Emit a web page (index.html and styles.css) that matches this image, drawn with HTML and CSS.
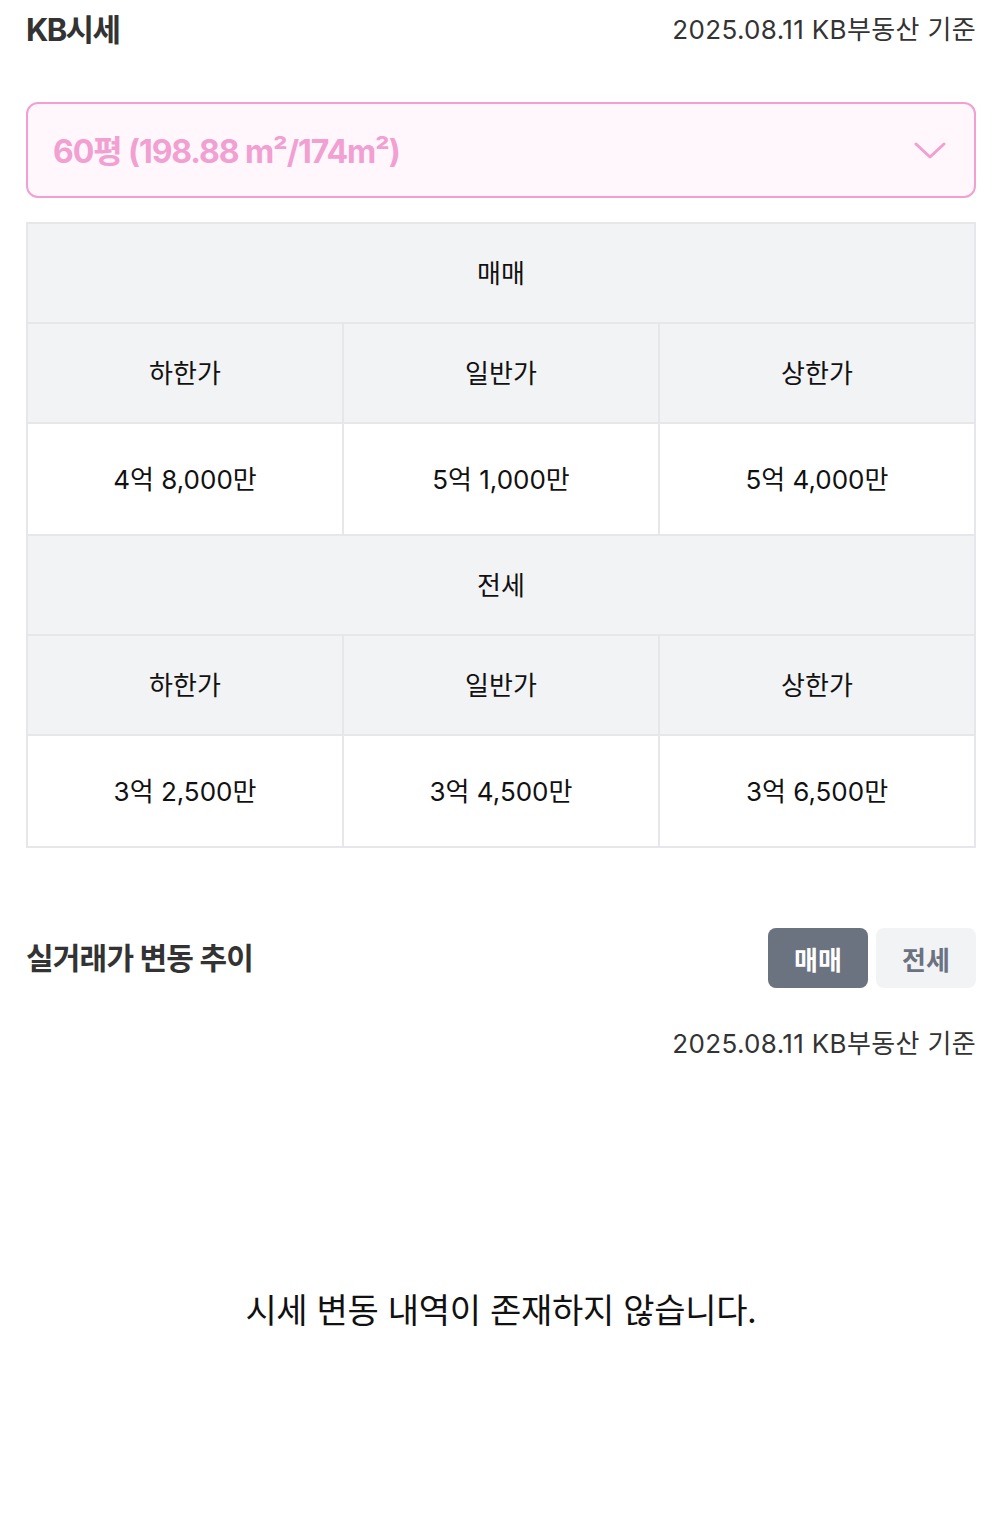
FILE: index.html
```html
<!DOCTYPE html>
<html lang="ko">
<head>
<meta charset="utf-8">
<link rel="stylesheet" href="styles.css">
</head>
<body>
<div class="page">
  <div class="top">
    <h1 class="title">KB시세</h1>
    <span class="basis">2025.08.11 KB부동산 기준</span>
  </div>
  <div class="select">
    <span class="select-text">60평 (198.88 m²/174m²)</span>
    <svg class="chev" width="32" height="18" viewBox="0 0 32 18"><polyline points="2,2 16,15 30,2" fill="none" stroke="#f29fd2" stroke-width="3" stroke-linecap="round" stroke-linejoin="round"/></svg>
  </div>
  <table class="price">
    <tr class="head"><td colspan="3">매매</td></tr>
    <tr class="head"><td>하한가</td><td>일반가</td><td>상한가</td></tr>
    <tr class="val"><td>4억 8,000만</td><td>5억 1,000만</td><td>5억 4,000만</td></tr>
    <tr class="head"><td colspan="3">전세</td></tr>
    <tr class="head"><td>하한가</td><td>일반가</td><td>상한가</td></tr>
    <tr class="val"><td>3억 2,500만</td><td>3억 4,500만</td><td>3억 6,500만</td></tr>
  </table>
  <div class="trend-head">
    <h2 class="trend-title">실거래가 변동 추이</h2>
    <div class="tabs">
      <button class="tab active">매매</button>
      <button class="tab">전세</button>
    </div>
  </div>
  <div class="basis-row"><span class="basis">2025.08.11 KB부동산 기준</span></div>
  <div class="empty">시세 변동 내역이 존재하지 않습니다.</div>
</div>
</body>
</html>
```
FILE: styles.css
```css
* { box-sizing: border-box; }
html, body { margin: 0; padding: 0; background: #fff; }
body {
  font-family: "Inter", "Noto Sans CJK KR", sans-serif;
  color: #111;
}
.page { padding: 0 24px 0 26px; }
.top {
  display: flex;
  justify-content: space-between;
  align-items: center;
  height: 54px;
  margin-bottom: 48px;
}
.title {
  margin: 0;
  font-size: 31px;
  font-weight: 700;
  letter-spacing: -1.6px;
  color: #333;
}
.basis {
  font-size: 26px;
  color: #333;
  letter-spacing: 0.35px;
}
.select {
  height: 96px;
  border: 2px solid #f29fd2;
  border-radius: 12px;
  background: #fff7fc;
  display: flex;
  align-items: center;
  justify-content: space-between;
  padding: 0 28px 3px 25px;
}
.select-text {
  font-size: 32px;
  font-weight: 700;
  color: #f29fd2;
  letter-spacing: -1.1px;
}
.chev { display: block; margin-top: 4px; }
.price {
  margin-top: 24px;
  width: 100%;
  border-collapse: collapse;
  table-layout: fixed;
  border: 2px solid #e5e7eb;
}
.price td {
  border: 2px solid #e5e7eb;
  text-align: center;
  font-size: 26px;
  color: #111;
  padding: 0 0 4px;
}
.price .head td { background: #f2f3f5; height: 100px; }
.price .val td { background: #fff; height: 112px; }
.trend-head {
  margin-top: 80px;
  display: flex;
  justify-content: space-between;
  align-items: center;
}
.trend-title {
  margin: 0 0 4px;
  font-size: 30px;
  font-weight: 700;
  color: #333;
  letter-spacing: -0.8px;
}
.tabs { display: flex; gap: 8px; }
.tab {
  width: 100px;
  height: 60px;
  border: none;
  border-radius: 8px;
  font-family: inherit;
  font-size: 26px;
  font-weight: 700;
  background: #f2f3f5;
  color: #6b7280;
  padding: 0;
}
.tab.active { background: #6b7280; color: #fff; }
.basis-row {
  margin-top: 35px;
  display: flex;
  justify-content: flex-end;
}
.empty {
  margin-top: 224px;
  text-align: center;
  font-size: 34px;
  color: #111;
  letter-spacing: -0.3px;
}
```
